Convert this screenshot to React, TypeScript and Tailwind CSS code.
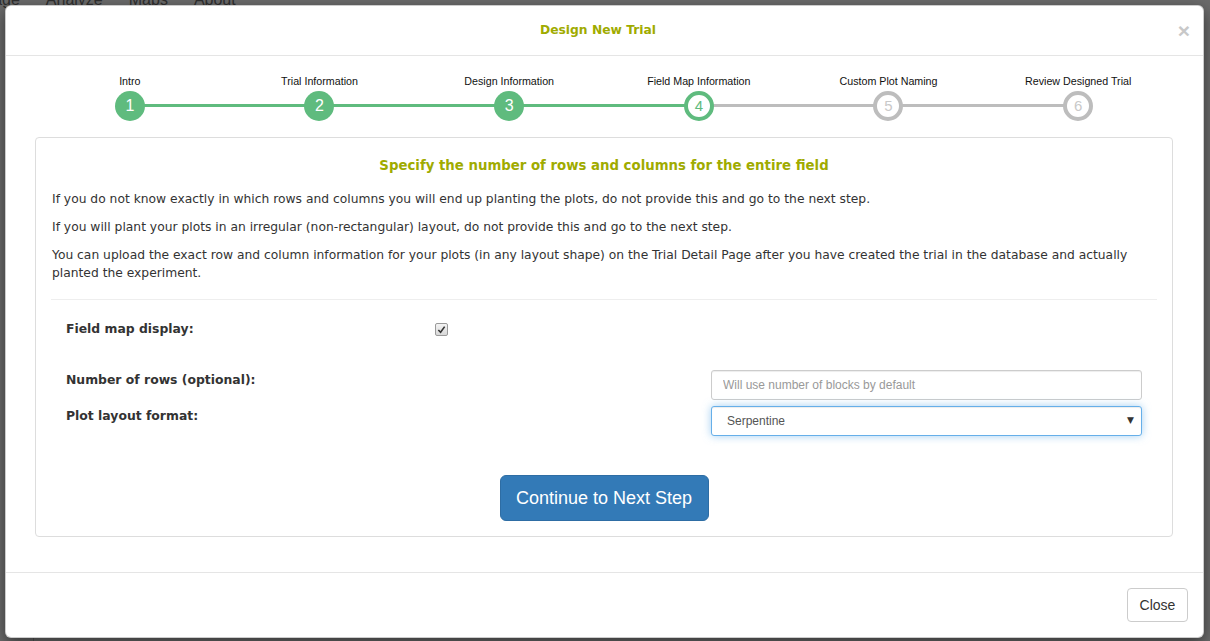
import React from "react";

const steps = [
  "Intro",
  "Trial Information",
  "Design Information",
  "Field Map Information",
  "Custom Plot Naming",
  "Review Designed Trial",
];

const current = 4;

function Stepper() {
  return (
    <div className="grid grid-cols-6">
      {steps.map((label, idx) => {
        const n = idx + 1;
        const leftDone = n <= current;
        const rightDone = n < current;
        return (
          <div key={label} className="flex flex-col items-center">
            <span className="text-[10.7px] leading-[13px] text-[#111]">{label}</span>
            <div className="relative mt-[3px] flex h-[30px] w-full justify-center">
              {idx > 0 && (
                <div
                  className={
                    leftDone
                      ? "absolute left-0 right-1/2 top-[13px] h-[3px] bg-[#5fbb7e]"
                      : "absolute left-0 right-1/2 top-[13px] h-[3px] bg-[#bdbdbd]"
                  }
                />
              )}
              {idx < steps.length - 1 && (
                <div
                  className={
                    rightDone
                      ? "absolute left-1/2 right-0 top-[13px] h-[3px] bg-[#5fbb7e]"
                      : "absolute left-1/2 right-0 top-[13px] h-[3px] bg-[#bdbdbd]"
                  }
                />
              )}
              {n < current && (
                <div className="relative z-10 flex h-[30px] w-[30px] items-center justify-center rounded-full bg-[#5fbb7e] text-[16px] text-white">
                  {n}
                </div>
              )}
              {n === current && (
                <div className="relative z-10 flex h-[30px] w-[30px] items-center justify-center rounded-full border-[4px] border-[#5fbb7e] bg-white text-[15px] text-[#5fbb7e]">
                  {n}
                </div>
              )}
              {n > current && (
                <div className="relative z-10 flex h-[30px] w-[30px] items-center justify-center rounded-full border-[4px] border-[#bdbdbd] bg-white text-[15px] text-[#c9c9c9]">
                  {n}
                </div>
              )}
            </div>
          </div>
        );
      })}
    </div>
  );
}

export default function App() {
  return (
    <div className="relative h-[641px] w-[1210px] overflow-hidden bg-[#6b6b6b] font-['Liberation_Sans',Arial,sans-serif] text-[#333]">
      {/* page behind the backdrop */}
      <div className="absolute left-[-38px] top-[-12px] flex gap-[26px] text-[16px] text-[#2f2f2f]">
        <span>Manage</span>
        <span>Analyze</span>
        <span>Maps</span>
        <span>About</span>
      </div>
      <div className="absolute left-[33px] top-[637px] h-[10px] w-[150px] border-l border-t border-[#555]" />

      {/* modal */}
      <div className="relative z-10 ml-[5px] mt-[5px] flex w-[1199px] flex-col rounded-[6px] border border-[rgba(0,0,0,0.2)] bg-white shadow-[0_5px_15px_rgba(0,0,0,0.5)]">
        <div className="relative border-b border-[#e5e5e5] py-[14px] pr-[13px] text-center">
          <h4 className="font-['DejaVu_Sans',sans-serif] text-[12.3px] font-bold leading-[21px] text-[#9fab00]">
            Design New Trial
          </h4>
          <button
            type="button"
            className="absolute right-[13px] top-[14px] text-[21px] font-bold leading-[21px] text-[#c8c8c8]"
          >
            ×
          </button>
        </div>

        <div className="pb-[35px] pl-[29px] pr-[30px] pt-[19px]">
          <Stepper />

          <div className="mt-[16px] rounded-[4px] border border-[#ddd] px-[15px] pb-[15px] pt-[18px] font-['DejaVu_Sans',sans-serif]">
            <h4 className="text-center text-[13.3px] font-bold leading-[20px] text-[#9fab00]">
              Specify the number of rows and columns for the entire field
            </h4>
            <div className="mt-[14px] px-px text-[12.3px] leading-[18px]">
              <p>
                If you do not know exactly in which rows and columns you will end up planting the plots, do not provide this and go to the next step.
              </p>
              <p className="mt-[10px]">
                If you will plant your plots in an irregular (non-rectangular) layout, do not provide this and go to the next step.
              </p>
              <p className="mt-[10px]">
                You can upload the exact row and column information for your plots (in any layout shape) on the Trial Detail Page after you have created the trial in the database and actually planted the experiment.
              </p>
            </div>
            <hr className="mt-[17px] border-t border-[#eee]" />

            <div className="mt-[19px] pl-[15px]">
              <div className="flex h-[20px] items-center">
                <label className="w-[369px] text-[12.4px] font-bold leading-[20px]">Field map display:</label>
                <span className="flex h-[13px] w-[13px] items-center justify-center rounded-[2px] border border-[#9a9a9a] bg-gradient-to-b from-[#f4f4f4] to-[#d8d8d8]">
                  <svg viewBox="0 0 10 10" className="h-[9px] w-[9px]">
                    <path d="M1.5 5.5 L4 8 L8.5 1.8" fill="none" stroke="#333" strokeWidth="1.8" />
                  </svg>
                </span>
              </div>

              <div className="mt-[31px] flex items-start">
                <label className="w-[645px] pt-px text-[12.4px] font-bold leading-[18px]">Number of rows (optional):</label>
                <input
                  type="text"
                  placeholder="Will use number of blocks by default"
                  className="h-[30px] w-[431px] rounded-[3px] border border-[#ccc] px-[11px] font-['Liberation_Sans',Arial,sans-serif] text-[12px] shadow-[inset_0_1px_1px_rgba(0,0,0,0.075)] outline-none placeholder:text-[#999]"
                />
              </div>

              <div className="mt-[6px] flex items-start">
                <label className="w-[645px] pt-px text-[12.4px] font-bold leading-[18px]">Plot layout format:</label>
                <div className="relative">
                  <select className="h-[30px] w-[431px] appearance-none rounded-[3px] border border-[#66afe9] bg-white px-[15px] font-['Liberation_Sans',Arial,sans-serif] text-[12px] text-[#555] shadow-[inset_0_1px_1px_rgba(0,0,0,0.075),0_0_8px_rgba(102,175,233,0.6)] outline-none">
                    <option>Serpentine</option>
                    <option>Zigzag</option>
                  </select>
                  <span className="pointer-events-none absolute right-[8px] top-[8px] text-[9px] text-[#333]">▼</span>
                </div>
              </div>
            </div>

            <div className="mt-[39px] flex justify-center">
              <button
                type="button"
                className="h-[46px] w-[209px] rounded-[6px] border border-[#2e6da4] bg-[#337ab7] font-['Liberation_Sans',Arial,sans-serif] text-[18px] text-white"
              >
                Continue to Next Step
              </button>
            </div>
          </div>
        </div>

        <div className="flex justify-end border-t border-[#e5e5e5] px-[15px] py-[15px]">
          <button
            type="button"
            className="h-[34px] w-[61px] rounded-[4px] border border-[#ccc] bg-white text-[14px] text-[#333]"
          >
            Close
          </button>
        </div>
      </div>
    </div>
  );
}
